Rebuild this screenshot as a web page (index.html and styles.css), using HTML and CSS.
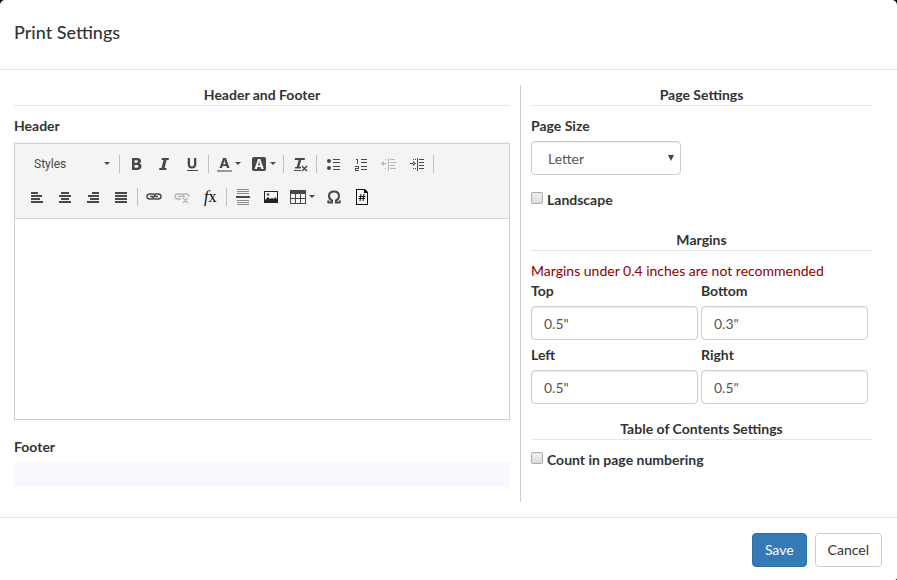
FILE: index.html
```html
<!DOCTYPE html>
<html lang="en">
<head>
<meta charset="utf-8">
<title>Print Settings</title>
<link rel="stylesheet" href="styles.css">
</head>
<body>
<form class="dialog">
  <header class="dialog-header"><h1>Print Settings</h1></header>
  <main class="dialog-body">
    <section class="column content-column">
      <h2>Header and Footer</h2>
      <label class="field-label" for="header-text">Header</label>
      <div class="editor-wrap">
        <div class="editor">
          <div class="toolbar">
            <div class="tool-row">
              <button type="button" class="combo">Styles <span class="caret"></span></button>
              <span class="sep"></span>
              <button type="button" class="tool" aria-label="Bold"><svg viewBox="0 0 16 16"><path fill-rule="evenodd" d="M4 2h5c3 0 4 1 4 3 0 1-.6 2-1.600 2.500C13 8 13.500 9 13.500 10.300 13.500 13 11.500 14 9 14H4zM6.500 4.200v2.500h2c1 0 1.500-.4 1.500-1.200s-.5-1.300-1.500-1.300zM6.500 9v2.800h2.200c1.200 0 1.700-.5 1.700-1.400S9.900 9 8.700 9z"/></svg></button>
              <button type="button" class="tool" aria-label="Italic"><svg viewBox="0 0 16 16"><path d="M6 2h7l-.4 2h-2l-2 8h2l-.5 2H3l.5-2h2l2-8h-2z"/></svg></button>
              <button type="button" class="tool" aria-label="Underline"><svg viewBox="0 0 16 16"><path d="M4 2h2v6c0 1.600.6 2.500 2 2.500s2-.9 2-2.500V2h2.300v6c0 3-1.600 4.500-4.300 4.500S3.700 11 3.700 8V2zM3 14h11v1H3z"/></svg></button>
              <span class="sep"></span>
              <button type="button" class="tool menu" aria-label="Text color"><svg viewBox="0 0 16 16"><path fill-rule="evenodd" d="M7 2h3l3.500 10H11l-.7-2H6.600L6 12H3.500zM8.400 4.500L7.200 8.300h2.500z"/><path fill="#999" d="M1 14h15v2H1z"/></svg><span class="caret"></span></button>
              <button type="button" class="tool menu" aria-label="Background color"><svg viewBox="0 0 16 16"><path fill-rule="evenodd" d="M3 1h10q2 0 2 2v10q0 2-2 2H3q-2 0-2-2V3q0-2 2-2zM7 3L3.500 13H6l.6-2h3l.7 2h2.500L9.300 3zM8.100 5.500l1.100 3.700H7z"/></svg><span class="caret"></span></button>
              <span class="sep"></span>
              <button type="button" class="tool" aria-label="Remove format"><svg viewBox="0 0 16 16"><path d="M3 2h10l-.4 2H9.200l-2 7H9v1.500H3V11h1.700l2-7H2.600zM2 14h7v1H2z"/><path fill="none" stroke="#484848" stroke-width="1.500" d="M10 10l5 5m0-5l-5 5"/></svg></button>
              <span class="sep"></span>
              <button type="button" class="tool" aria-label="Bulleted list"><svg viewBox="0 0 16 16"><circle cx="4" cy="5" r="2"/><circle cx="4" cy="12" r="2"/><path d="M8 3h7v1H8zM8 6h7v1H8zM8 10h7v1H8zM8 13h7v1H8z"/></svg></button>
              <button type="button" class="tool" aria-label="Numbered list"><svg viewBox="0 0 16 16"><path d="M8 3h6v1H8zM8 6h6v1H8zM8 10h6v1H8zM8 13h6v1H8zM3 3h2v5H4V4H3zM2 10h4v3H3v1h3v1H2v-3h3v-1H2z"/></svg></button>
              <button type="button" class="tool disabled" disabled aria-label="Decrease indent"><svg viewBox="0 0 16 16"><path d="M7 2h1v13H7zM9 3h5v1H9zM9 6h6v1H9zM9 9h5v1H9zM9 12h6v1H9zM4 3h1v1H4zM4 12h1v1H4zM2 7h4v1H2zM0 7.500L3 5v5z"/></svg></button>
              <button type="button" class="tool" aria-label="Increase indent"><svg viewBox="0 0 16 16"><path d="M8 2h1v13H8zM10 3h5v1h-5zM10 6h5v1h-5zM10 9h5v1h-5zM10 12h5v1h-5zM4 3h1v1H4zM6 3h1v1H6zM4 12h1v1H4zM6 12h1v1H6zM1 7h4v1H1zM7 7.500L4 5v5z"/></svg></button>
              <span class="sep"></span>
            </div>
            <div class="tool-row">
              <button type="button" class="tool" aria-label="Align left"><svg viewBox="0 0 16 16"><path d="M2 3h7v2H2zM2 6h11v2H2zM2 9h9v2H2zM2 12h12v2H2z"/></svg></button>
              <button type="button" class="tool" aria-label="Center"><svg viewBox="0 0 16 16"><path d="M4 3h8v2H4zM2 6h12v2H2zM4 9h8v2H4zM2 12h12v2H2z"/></svg></button>
              <button type="button" class="tool" aria-label="Align right"><svg viewBox="0 0 16 16"><path d="M7 3h7v2H7zM3 6h11v2H3zM5 9h9v2H5zM2 12h12v2H2z"/></svg></button>
              <button type="button" class="tool" aria-label="Justify"><svg viewBox="0 0 16 16"><path d="M2 3h12v2H2zM2 6h12v2H2zM2 9h12v2H2zM2 12h12v2H2z"/></svg></button>
              <span class="sep"></span>
              <button type="button" class="tool" aria-label="Link"><svg viewBox="0 0 16 16"><path fill="none" stroke="#484848" stroke-width="1.400" d="M7 10H4q-3 0-3-2.500 0-2.500 3-2.500h3q2 0 2 2M9 5h3q3 0 3 2.500 0 2.500-3 2.500H9q-2 0-2-2M4 7.500h8"/></svg></button>
              <button type="button" class="tool disabled" disabled aria-label="Unlink"><svg viewBox="0 0 16 16"><path fill="none" stroke="#484848" stroke-width="1.400" d="M7 10H4q-3 0-3-2.500 0-2.500 3-2.500h3q2 0 2 2M9 5h3q3 0 3 2.500M4 7.500h7M9 9l5 5m0-5l-5 5"/></svg></button>
              <button type="button" class="tool formula" aria-label="Math formula"><i>f</i><span>x</span></button>
              <span class="sep"></span>
              <button type="button" class="tool" aria-label="Page break"><svg viewBox="0 0 16 16"><path d="M1 7h14v2H1z"/><path fill="#8a8a8a" d="M2 0h12v1H2zM2 2h12v1H2zM2 4h12v1H2zM2 11h12v1H2zM2 13h12v1H2zM2 15h12v1H2z"/></svg></button>
              <button type="button" class="tool" aria-label="Image"><svg viewBox="0 0 16 16"><path fill="#222" fill-rule="evenodd" d="M1 2h14v12H1zM2 3v8l3-3 2 2 2-1 2 1 1-2 2 2V3z"/><circle cx="5" cy="5.500" r="1.200"/></svg></button>
              <button type="button" class="tool menu" aria-label="Table"><svg viewBox="0 0 16 16"><path fill-rule="evenodd" d="M0 1h16v14H0zM1 5v4h4V5zM6 5v4h4V5zM11 5v4h4V5zM1 10v4h4v-4zM6 10v4h4v-4zM11 10v4h4v-4z"/></svg><span class="caret"></span></button>
              <button type="button" class="tool" aria-label="Special character"><svg viewBox="0 0 16 16"><path fill="none" stroke="#484848" stroke-width="2" d="M2 11.500l.5 2H6v-2C4 10.500 3 9 3 7c0-2.700 2-4.500 5-4.500s5 1.800 5 4.500c0 2-1 3.500-3 4.500v2h3.500l.5-2"/></svg></button>
              <button type="button" class="tool" aria-label="Page number"><svg viewBox="0 0 16 16"><path fill="#111" fill-rule="evenodd" d="M2 0h9l3 3v13H2zM3 1v14h10V4h-3V1z"/><path fill="none" stroke="#111" d="M7 5L6 12m4-7L9 12M5 7.500h6.500M4.500 9.500H11"/></svg></button>
            </div>
          </div>
          <textarea id="header-text"></textarea>
        </div>
      </div>
      <label class="field-label" for="footer-text">Footer</label>
      <input class="footer-box" id="footer-text" type="text">
    </section>
    <section class="column settings-column">
      <div class="group page-group">
        <h2>Page Settings</h2>
        <label class="field-label" for="size">Page Size</label>
        <div class="select-wrap"><select id="size"><option>Letter</option></select></div>
        <label class="check"><input type="checkbox"> Landscape</label>
      </div>
      <div class="group">
        <h2>Margins</h2>
        <p class="warning">Margins under 0.4 inches are not recommended</p>
        <div class="margins">
          <label>Top<input type="text" value='0.5"'></label>
          <label>Bottom<input type="text" value='0.3"'></label>
          <label>Left<input type="text" value='0.5"'></label>
          <label>Right<input type="text" value='0.5"'></label>
        </div>
      </div>
      <div class="group">
        <h2>Table of Contents Settings</h2>
        <label class="check"><input type="checkbox"> Count in page numbering</label>
      </div>
    </section>
  </main>
  <footer class="dialog-footer">
    <button type="button" class="btn primary">Save</button>
    <button type="button" class="btn">Cancel</button>
  </footer>
</form>
</body>
</html>
```
FILE: styles.css
```css
* { box-sizing: border-box; }
body {
  margin: 0;
  background: #000;
  color: #333;
  font: 14px/20px Lato, sans-serif;
}
button, input, select, textarea { font: inherit; color: inherit; margin: 0; }
.dialog {
  display: flex;
  flex-direction: column;
  min-height: 100vh;
  background: #fff;
  border-radius: 5px 5px 2px 0;
}
.dialog-header {
  padding: 20px 14px 24px;
  border-bottom: 1px solid #e5e5e5;
}
h1 { margin: 0; font-size: 18px; line-height: 25px; font-weight: 500; }
h2 {
  margin: 0 0 10px;
  border-bottom: 1px solid #e5e5e5;
  font-size: 14px;
  line-height: 20px;
  font-weight: 700;
  text-align: center;
}
.dialog-body {
  flex: 1;
  display: grid;
  grid-template-columns: 496fr 377fr;
  column-gap: 10px;
  padding: 15px 0 15px 14px;
}
.field-label { display: block; margin-bottom: 5px; font-weight: 700; }
.editor-wrap { margin-bottom: 15px; padding: 2px 0; background: #f8f9ff; }
.editor { border: 1px solid #cfcfcf; }
.toolbar {
  padding: 3px 8px 5px;
  border-bottom: 1px solid #d8d8d8;
  background: #f4f4f4;
}
.tool-row { display: flex; align-items: center; height: 33px; }
.combo, .tool {
  display: flex;
  align-items: center;
  height: 24px;
  padding: 0 6px;
  border: 0;
  background: none;
}
.combo {
  width: 94px;
  padding: 0 7px 0 11px;
  justify-content: space-between;
  font: 12px/20px Roboto, sans-serif;
  color: #484848;
}
.tool { gap: 3px; width: 28px; }
.menu { width: 35px; padding: 0 5px; }
.tool svg { flex: none; width: 16px; height: 16px; fill: #484848; }
.disabled { opacity: 0.35; }
.caret {
  border: 3px solid transparent;
  border-top-color: #484848;
  border-bottom: 0;
}
.sep { width: 1px; height: 18px; margin: 0 2px; background: #c0c0c0; }
.formula {
  gap: 0;
  padding: 0 4px 0 8px;
  font: 16px/20px "Liberation Serif", serif;
  color: #000;
}
.editor textarea {
  display: block;
  width: 100%;
  height: 200px;
  border: 0;
  resize: none;
}
.footer-box { display: block; width: 100%; height: 25px; border: 0; background: #f8f9ff; }
.settings-column { padding: 0 25px 0 10px; border-left: 1px solid #ccc; }
.group { margin-bottom: 15px; }
.page-group { margin-bottom: 20px; }
.select-wrap { position: relative; width: 150px; margin-bottom: 15px; }
.select-wrap::after {
  content: "";
  position: absolute;
  top: 14px;
  right: 7px;
  border: 3px solid transparent;
  border-top: 6px solid #444;
  border-bottom: 0;
}
select, .margins input {
  display: block;
  width: 100%;
  height: 34px;
  border: 1px solid #ccc;
  border-radius: 4px;
  background: #fff;
  box-shadow: inset 0 1px 1px rgba(0, 0, 0, 0.075);
  color: #555;
  font-weight: 400;
}
select { appearance: none; padding: 2px 16px 0; }
.margins input { margin-top: 5px; padding: 6px 12px; }
.check { display: flex; align-items: flex-start; gap: 4px; font-weight: 700; }
.check input {
  appearance: none;
  width: 12px;
  height: 12px;
  margin-top: 2px;
  border: 1px solid #aaa;
  border-radius: 2px;
  background: linear-gradient(#eee, #ddd);
}
.warning { margin: 0; color: #8b0000; }
.margins {
  display: grid;
  grid-template-columns: 1fr 1fr;
  gap: 5px 3px;
  margin-right: 4px;
  font-weight: 700;
}
.dialog-footer {
  display: flex;
  justify-content: flex-end;
  gap: 8px;
  padding: 15px 15px 13px;
  border-top: 1px solid #e5e5e5;
}
.btn {
  height: 34px;
  padding: 6px 12px;
  border: 1px solid #ccc;
  border-radius: 4px;
  background: #fff;
}
.primary { border-color: #2e6da4; background: #337ab7; color: #fff; }
```
